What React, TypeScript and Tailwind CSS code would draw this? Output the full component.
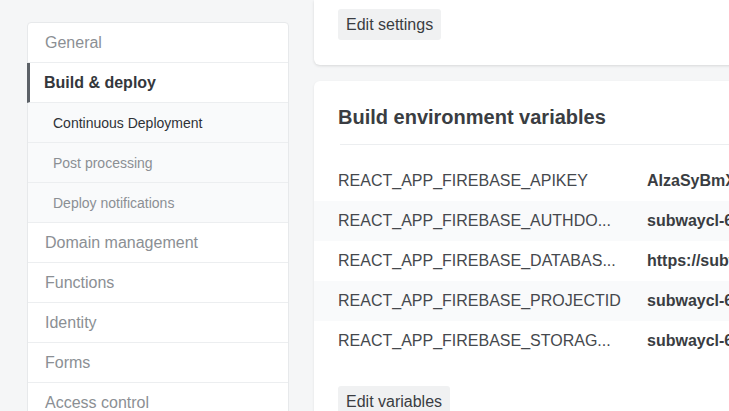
import React from 'react';

const navItems = [
  { label: 'General' },
  { label: 'Build & deploy', active: true },
  { label: 'Continuous Deployment', sub: true, active: true },
  { label: 'Post processing', sub: true },
  { label: 'Deploy notifications', sub: true },
  { label: 'Domain management' },
  { label: 'Functions' },
  { label: 'Identity' },
  { label: 'Forms' },
  { label: 'Access control' },
];

const envVars = [
  { key: 'REACT_APP_FIREBASE_APIKEY', value: 'AIzaSyBmXq3hF0vW' },
  { key: 'REACT_APP_FIREBASE_AUTHDO...', value: 'subwaycl-6b1f0.firebaseapp.com' },
  { key: 'REACT_APP_FIREBASE_DATABAS...', value: 'https://subwaycl-6b1f0.firebaseio.com' },
  { key: 'REACT_APP_FIREBASE_PROJECTID', value: 'subwaycl-6b1f0' },
  { key: 'REACT_APP_FIREBASE_STORAG...', value: 'subwaycl-6b1f0.appspot.com' },
];

const App = () => {
  return (
    <div
      className="h-[411px] w-[729px] overflow-hidden bg-[#f5f6f7] flex gap-[25px] pl-[27px]"
      style={{ fontFamily: '"Liberation Sans", Arial, sans-serif' }}
    >
      <nav className="mt-[22px] w-[262px] shrink-0 self-start bg-white border border-[#e7e9eb] rounded-[4px]">
        {navItems.map((item, i) => {
          if (item.sub) {
            return (
              <div
                key={i}
                className={`h-[40px] flex items-center pl-[25px] pt-[2px] text-[14px] border-b border-[#eceef0] bg-[#f9fafb] ${
                  item.active ? 'text-[#2f3237]' : 'text-[#8b8f94]'
                }`}
              >
                {item.label}
              </div>
            );
          }
          if (item.active) {
            return (
              <div
                key={i}
                className="h-[40px] flex items-center pl-[14px] text-[16px] font-bold text-[#34373c] border-b border-[#eceef0] border-l-[3px] border-l-[#5c6167] -ml-px"
              >
                {item.label}
              </div>
            );
          }
          return (
            <div
              key={i}
              className="h-[40px] flex items-center pl-[17px] text-[16px] text-[#8b8f94] border-b border-[#eceef0]"
            >
              {item.label}
            </div>
          );
        })}
      </nav>

      <main className="w-[700px] shrink-0 flex flex-col gap-[16px]">
        <section className="bg-white rounded-b-[6px] shadow-[0_1px_3px_rgba(0,0,0,0.12)] px-6 pt-[9px] pb-[25px]">
          <button className="h-[31px] px-2 rounded-[3px] bg-[#f0f1f2] text-[16px] text-[#3a3d42]">
            Edit settings
          </button>
        </section>

        <section className="bg-white rounded-t-[6px] shadow-[0_1px_3px_rgba(0,0,0,0.08)] pt-[22px] pb-6">
          <h2 className="px-6 text-[20px] leading-[28px] font-bold text-[#3a3d42]">
            Build environment variables
          </h2>
          <div className="ml-[26px] mr-6 mt-[13px] mb-4 border-t border-[#eceef0]" />
          <div>
            {envVars.map((v, i) => (
              <div
                key={v.key}
                className={`h-[40px] flex items-center px-6 text-[16px] ${
                  i % 2 === 1 ? 'bg-[#f9fafb]' : 'bg-white'
                }`}
              >
                <span className="w-[309px] shrink-0 text-[#45484d] whitespace-nowrap">{v.key}</span>
                <span className="font-bold text-[#3a3d42] whitespace-nowrap">{v.value}</span>
              </div>
            ))}
          </div>
          <div className="px-6 mt-[25px]">
            <button className="h-[31px] px-2 rounded-[3px] bg-[#f0f1f2] text-[16px] text-[#3a3d42]">
              Edit variables
            </button>
          </div>
        </section>
      </main>
    </div>
  );
};

export default App;
